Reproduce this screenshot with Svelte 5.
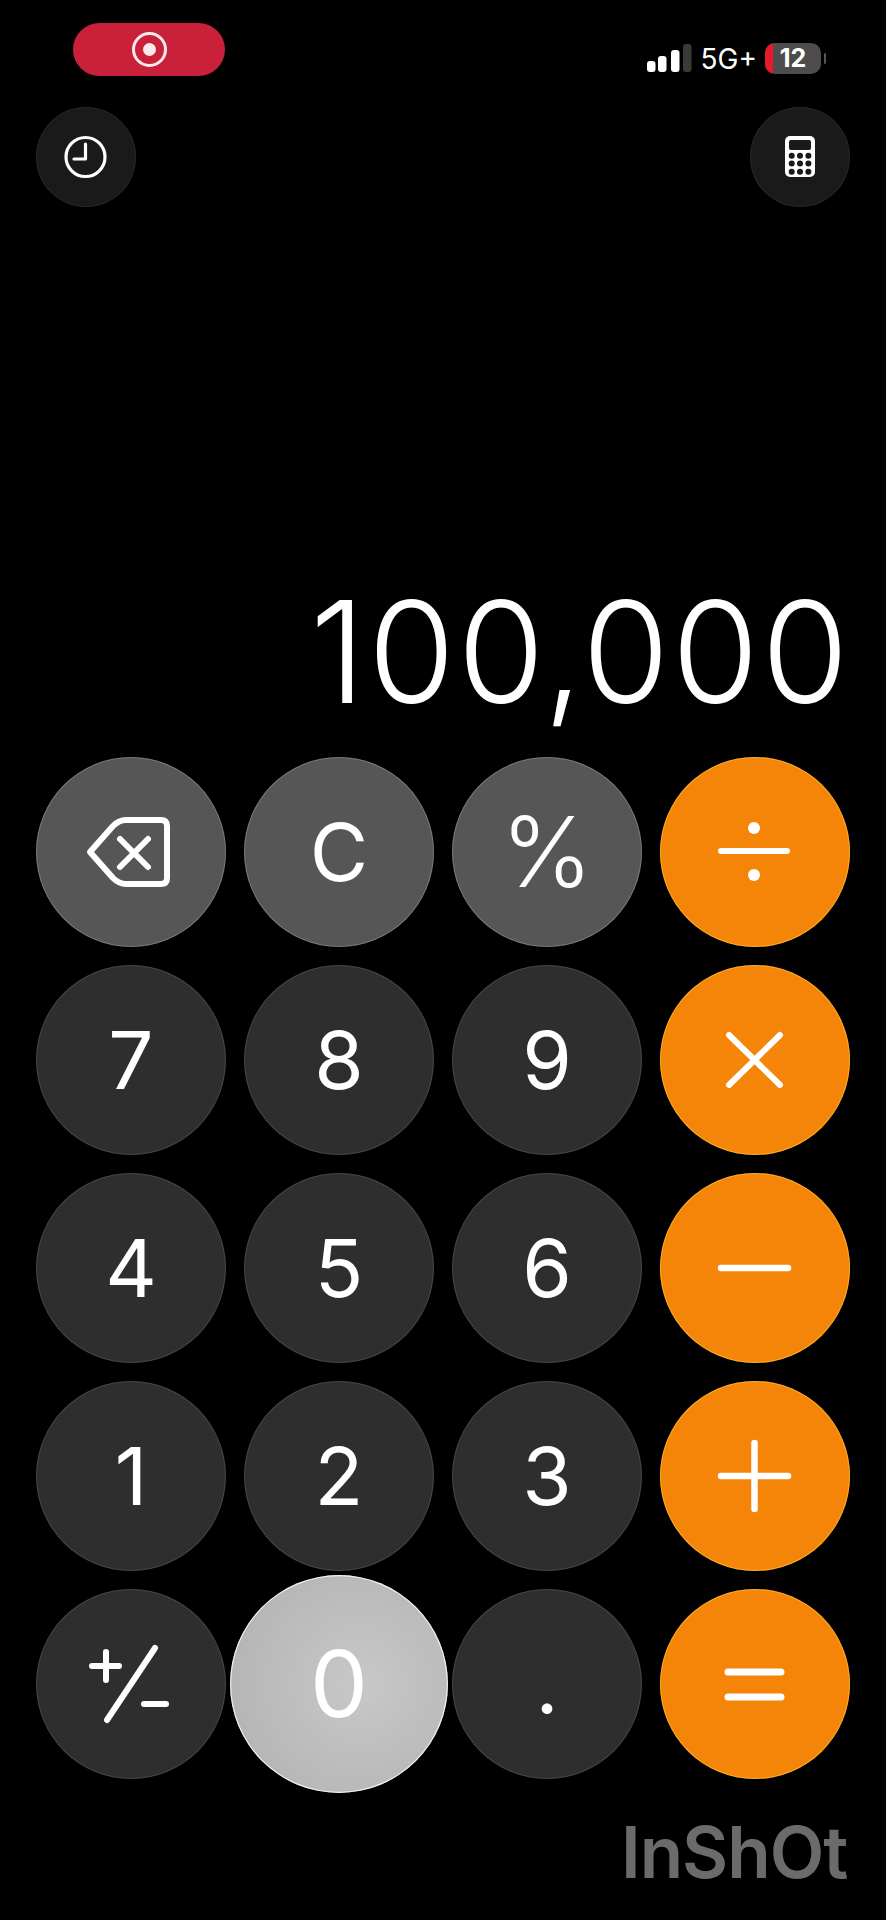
<script>
  const keys = [
    { id: 'back', tone: 'gray', icon: 'back' },
    { id: 'C', tone: 'gray', label: 'C' },
    { id: '%', tone: 'gray', label: '%' },
    { id: 'div', tone: 'orange', icon: 'div' },
    { id: '7', tone: 'dark', label: '7' },
    { id: '8', tone: 'dark', label: '8' },
    { id: '9', tone: 'dark', label: '9' },
    { id: 'mul', tone: 'orange', icon: 'mul' },
    { id: '4', tone: 'dark', label: '4' },
    { id: '5', tone: 'dark', label: '5' },
    { id: '6', tone: 'dark', label: '6' },
    { id: 'sub', tone: 'orange', icon: 'sub' },
    { id: '1', tone: 'dark', label: '1' },
    { id: '2', tone: 'dark', label: '2' },
    { id: '3', tone: 'dark', label: '3' },
    { id: 'add', tone: 'orange', icon: 'add' },
    { id: 'sign', tone: 'dark', icon: 'sign' },
    { id: '0', tone: 'dark', label: '0', pressed: true },
    { id: '.', tone: 'dark', label: '.' },
    { id: 'eq', tone: 'orange', icon: 'eq' }
  ];

  const bars = [
    { x: 0, h: 11, dim: false },
    { x: 11, h: 16, dim: false },
    { x: 24, h: 22, dim: false },
    { x: 36, h: 28, dim: true }
  ];
</script>

<div class="phone">
  <header class="status">
    <div class="recording">
      <span class="rec-ring"><span class="rec-dot"></span></span>
    </div>
    <div class="status-right">
      <svg class="signal" width="45" height="28" viewBox="0 0 45 28">
        {#each bars as bar (bar.x)}
          <rect x={bar.x} y={28 - bar.h} width="8.5" height={bar.h} rx="3" fill={bar.dim ? '#3a3a3a' : '#fff'} />
        {/each}
      </svg>
      <span class="network">5G+</span>
      <div class="battery">
        <span class="battery-low"></span>
        <span class="battery-text">12</span>
      </div>
      <span class="battery-nub"></span>
    </div>
  </header>

  <div class="toolbar">
    <button class="tool" aria-label="History">
      <svg width="100" height="100" viewBox="0 0 100 100" fill="none" stroke="#fff" stroke-width="3.2">
        <circle cx="49.5" cy="50" r="19.5" />
        <path d="M49.5 37V52H38" stroke-linecap="round" stroke-linejoin="round" />
      </svg>
    </button>
    <button class="tool" aria-label="Calculator mode">
      <svg width="100" height="100" viewBox="0 0 100 100">
        <rect x="35" y="29" width="30" height="41" rx="5" fill="#fff" />
        <rect x="39" y="33" width="22" height="10" rx="2" fill="#1a1a1a" />
        {#each [48.7, 56.5, 64.7] as cy (cy)}
          {#each [41.7, 50, 58.4] as cx (cx)}
            <circle {cx} {cy} r="3" fill="#1a1a1a" />
          {/each}
        {/each}
      </svg>
    </button>
  </div>

  <div class="display">100,000</div>

  <div class="keypad">
    {#each keys as key (key.id)}
      <button class="key {key.tone}" class:pressed={key.pressed}>
        {#if key.label}
          <span class:percent={key.label === '%'}>{key.label}</span>
        {:else}
          <svg width="190" height="190" viewBox="0 0 190 190" fill="none" stroke="#fff" stroke-width="6" stroke-linecap="round" stroke-linejoin="round">
            {#if key.icon === 'back'}
              <path d="M54 95 77 69Q83 63 90 63H125Q131 63 131 69V121Q131 127 125 127H90Q83 127 77 121Z" />
              <path d="M84 82 112 110M112 82 84 110" />
            {:else if key.icon === 'div'}
              <path d="M61 94H127" />
              <circle cx="94" cy="71" r="6" fill="#fff" stroke="none" />
              <circle cx="94" cy="118" r="6" fill="#fff" stroke="none" />
            {:else if key.icon === 'mul'}
              <path d="M69 70 120 120M120 70 69 120" />
            {:else if key.icon === 'sub'}
              <path d="M61 95H128" stroke-width="6.5" />
            {:else if key.icon === 'add'}
              <path d="M61 95H128M94.5 62V128" stroke-width="6.5" />
            {:else if key.icon === 'eq'}
              <path d="M68 83H121M68 108H121" stroke-width="7" />
            {:else if key.icon === 'sign'}
              <path d="M56 77H83M70 63V91" />
              <path d="M119 59 71 131" />
              <path d="M108 115H130" />
            {/if}
          </svg>
        {/if}
      </button>
    {/each}
  </div>

  <div class="watermark">InShOt</div>
</div>

<style>
  :global(body) {
    background: #000;
  }

  .phone {
    position: relative;
    height: 1920px;
    overflow: hidden;
    background: #000;
    font-family: Inter, "Liberation Sans", sans-serif;
    color: #fff;
  }

  button {
    padding: 0;
    font: inherit;
    color: inherit;
    cursor: pointer;
  }

  .status {
    display: flex;
    justify-content: space-between;
    align-items: center;
    height: 53px;
    padding: 23px 60px 0 73px;
  }

  .recording {
    display: flex;
    align-items: center;
    justify-content: center;
    width: 152px;
    height: 53px;
    border-radius: 27px;
    background: #c9213a;
  }

  .rec-ring {
    display: flex;
    align-items: center;
    justify-content: center;
    width: 35px;
    height: 35px;
    box-sizing: border-box;
    border: 3px solid #fbe9ec;
    border-radius: 50%;
  }

  .rec-dot {
    width: 13px;
    height: 13px;
    border-radius: 50%;
    background: #fbe9ec;
  }

  .status-right {
    display: flex;
    align-items: center;
    margin-top: 18px;
  }

  .signal {
    margin-top: -2px;
  }

  .network {
    margin-left: 9px;
    font-size: 28px;
    line-height: 1;
  }

  .battery {
    position: relative;
    overflow: hidden;
    display: flex;
    align-items: center;
    justify-content: center;
    width: 56px;
    height: 31px;
    margin-left: 8px;
    border-radius: 10px;
    background: #4d4d4d;
  }

  .battery-low {
    position: absolute;
    left: 0;
    top: 0;
    bottom: 0;
    width: 8px;
    background: #e8192c;
  }

  .battery-text {
    font-size: 25px;
    font-weight: 700;
    line-height: 1;
  }

  .battery-nub {
    width: 2px;
    height: 11px;
    margin-left: 3px;
    border-radius: 1px;
    background: #555;
  }

  .toolbar {
    display: flex;
    justify-content: space-between;
    margin-top: 31px;
    padding: 0 36px;
  }

  .tool {
    width: 100px;
    height: 100px;
    border: none;
    border-radius: 50%;
    background: #1a1a1a;
    box-shadow: inset 0 0 0 1px #262626;
  }

  .tool svg {
    display: block;
  }

  .display {
    height: 550px;
    box-sizing: border-box;
    padding: 0 35px 35px 0;
    display: flex;
    justify-content: flex-end;
    align-items: flex-end;
    font-size: 141px;
    font-weight: 300;
    line-height: 1;
    letter-spacing: 2.5px;
  }

  .keypad {
    display: grid;
    grid-template-columns: repeat(4, 190px);
    grid-auto-rows: 190px;
    gap: 18px;
    padding: 0 36px;
  }

  .key {
    display: flex;
    align-items: center;
    justify-content: center;
    border: none;
    border-radius: 50%;
    font-size: 80px;
    font-weight: 380;
    line-height: 1;
    box-shadow: inset 0 0 0 1px rgba(255, 255, 255, 0.12);
  }

  .key svg {
    display: block;
  }

  .dark {
    background: #2e2e2e;
  }

  .gray {
    background: #565656;
    box-shadow: inset 0 0 0 1px rgba(255, 255, 255, 0.22);
  }

  .orange {
    background: #f58508;
    box-shadow: inset 0 0 0 1px rgba(255, 200, 60, 0.6);
  }

  .pressed {
    position: relative;
    z-index: 1;
    transform: scale(1.147);
    background: radial-gradient(circle at 60% 50%, #c8c8c8, #b0b0b0);
    box-shadow: inset 0 0 0 1px rgba(255, 255, 255, 0.8);
    font-weight: 400;
  }

  .percent {
    font-size: 98px;
    font-weight: 300;
  }

  .watermark {
    position: absolute;
    left: 621px;
    top: 1817px;
    font-size: 71px;
    font-weight: 600;
    line-height: 1;
    letter-spacing: -1px;
    color: #6b6b6b;
  }
</style>
